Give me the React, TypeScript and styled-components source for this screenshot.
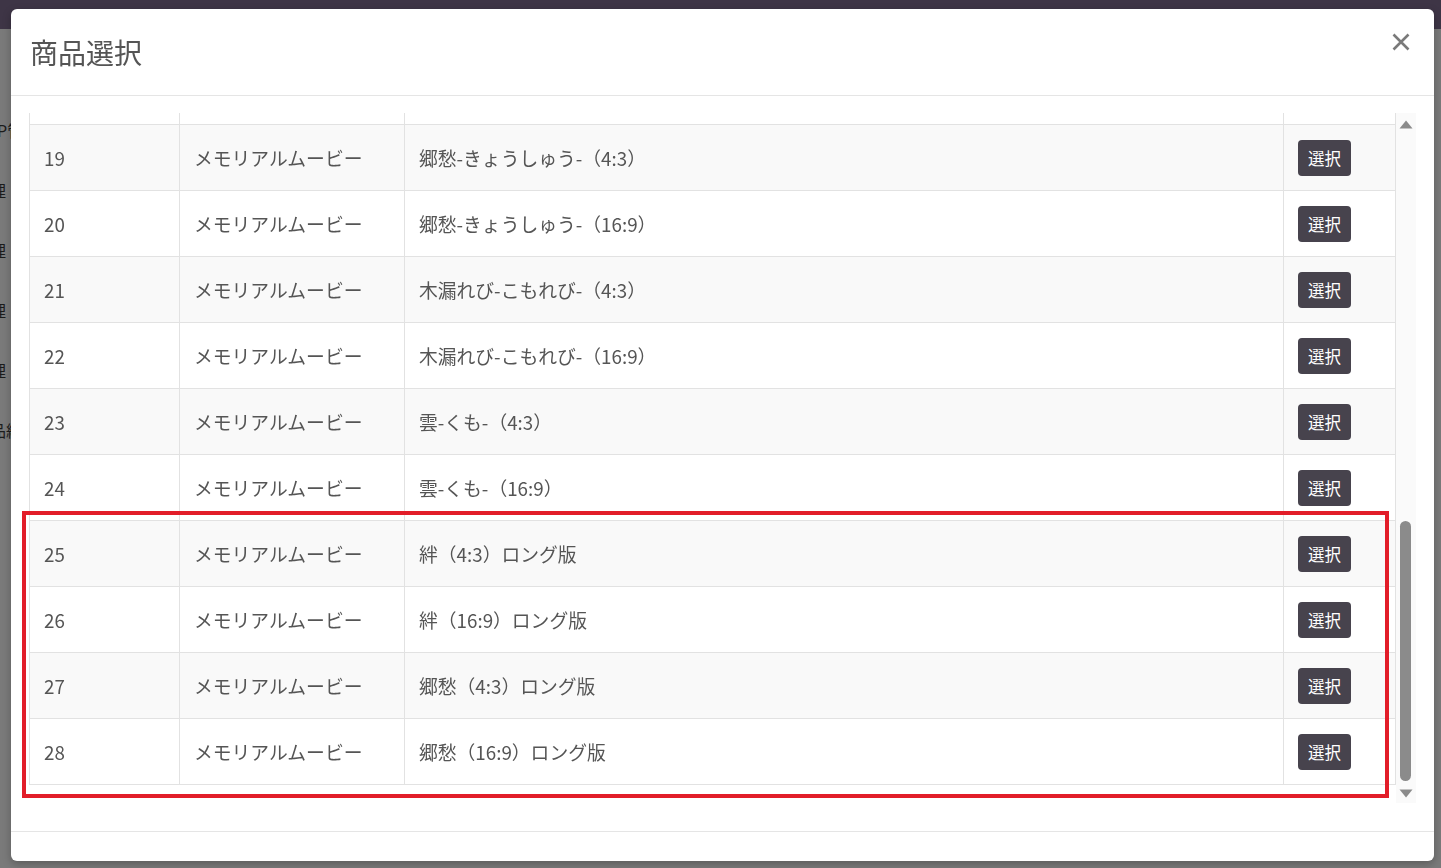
import React, { useLayoutEffect, useRef } from "react";
import styled, { createGlobalStyle } from "styled-components";

const GlobalStyle = createGlobalStyle`
  html, body { margin: 0; padding: 0; height: 100%; overflow: hidden; }
  body {
    font-family: "Noto Sans CJK JP", "Noto Sans", sans-serif;
    background: #7a7a7a;
  }
  #root { height: 100%; }
`;

const Page = styled.div`
  height: 100vh;
  display: flex;
  flex-direction: column;
  background: #7a7a7a;
  overflow: hidden;
`;

const NavBar = styled.header`
  height: 29px;
  flex: none;
  background: #3e3546;
`;

const PageBody = styled.div`
  flex: 1;
  display: flex;
`;

const SideMenu = styled.nav`
  width: 160px;
  flex: none;
  padding-top: 71px;
  display: flex;
  flex-direction: column;
`;

const MenuItem = styled.div<{ $indent: number }>`
  height: 60px;
  display: flex;
  align-items: center;
  white-space: nowrap;
  font-size: 16px;
  color: #1c1c1c;
  text-indent: ${(p) => p.$indent}px;
`;

const Modal = styled.div`
  position: fixed;
  top: 9px;
  left: 11px;
  width: 1423px;
  height: 852px;
  background: #fff;
  border-radius: 6px;
  display: flex;
  flex-direction: column;
  box-shadow: 0 3px 9px rgba(0, 0, 0, 0.25);
`;

const ModalHeader = styled.div`
  box-sizing: border-box;
  height: 87px;
  flex: none;
  display: flex;
  align-items: center;
  justify-content: space-between;
  padding: 0 24px 0 19px;
  border-bottom: 1px solid #e5e5e5;
`;

const Title = styled.h4`
  margin: 0;
  font-size: 28px;
  font-weight: 400;
  color: #555;
  letter-spacing: 0;
`;

const CloseButton = styled.button`
  border: 0;
  background: transparent;
  padding: 0;
  margin-top: -20px;
  width: 18px;
  height: 18px;
  display: flex;
  cursor: pointer;
`;

const ModalBody = styled.div`
  flex: 1;
  min-height: 0;
  position: relative;
  display: flex;
  padding: 17px 18px 28px 18px;
`;

const TableScroll = styled.div`
  flex: 1;
  min-width: 0;
  overflow: hidden;
`;

const Table = styled.table`
  width: 100%;
  border-collapse: collapse;
  table-layout: fixed;
  margin-bottom: 20px;
  color: #555;
  font-size: 18.8px;
`;

const Row = styled.tr<{ $striped: boolean }>`
  background: ${(p) => (p.$striped ? "#f9f9f9" : "#fff")};
`;

const Cell = styled.td`
  border: 1px solid #e2e2e2;
  height: 65px;
  padding: 0 14px;
  vertical-align: middle;
  white-space: nowrap;
  overflow: hidden;
`;

const SelectButton = styled.button`
  display: inline-flex;
  align-items: center;
  height: 36px;
  padding: 0 10px;
  border: 0;
  border-radius: 4px;
  background: #47434d;
  color: #fff;
  font-family: inherit;
  font-size: 16.5px;
  cursor: pointer;
`;

const ScrollBar = styled.div`
  width: 20px;
  flex: none;
  display: flex;
  flex-direction: column;
  background: #fafafa;
`;

const ScrollArrow = styled.div<{ $h: number }>`
  height: ${(p) => p.$h}px;
  flex: none;
  display: flex;
  align-items: center;
  justify-content: center;
`;

const Track = styled.div`
  flex: 1;
  display: flex;
  flex-direction: column;
  justify-content: flex-end;
  padding-bottom: 3px;
`;

const Thumb = styled.div`
  width: 11px;
  height: 260px;
  margin-left: 4px;
  border-radius: 6px;
  background: #8b8b8b;
`;

const Highlight = styled.div`
  position: absolute;
  left: 11px;
  top: 415px;
  width: 1367px;
  height: 287px;
  box-sizing: border-box;
  border: 4px solid #e21d29;
  pointer-events: none;
`;

const ModalFooter = styled.div`
  height: 29px;
  flex: none;
  border-top: 1px solid #e5e5e5;
`;

const products = [
  { id: 18, category: "メモリアルムービー", name: "絆-きずな-（16:9）" },
  { id: 19, category: "メモリアルムービー", name: "郷愁-きょうしゅう-（4:3）" },
  { id: 20, category: "メモリアルムービー", name: "郷愁-きょうしゅう-（16:9）" },
  { id: 21, category: "メモリアルムービー", name: "木漏れび-こもれび-（4:3）" },
  { id: 22, category: "メモリアルムービー", name: "木漏れび-こもれび-（16:9）" },
  { id: 23, category: "メモリアルムービー", name: "雲-くも-（4:3）" },
  { id: 24, category: "メモリアルムービー", name: "雲-くも-（16:9）" },
  { id: 25, category: "メモリアルムービー", name: "絆（4:3）ロング版" },
  { id: 26, category: "メモリアルムービー", name: "絆（16:9）ロング版" },
  { id: 27, category: "メモリアルムービー", name: "郷愁（4:3）ロング版" },
  { id: 28, category: "メモリアルムービー", name: "郷愁（16:9）ロング版" },
];

const menu = [
  { label: "SHOP管理", indent: -36 },
  { label: "会員管理", indent: -58 },
  { label: "受注管理", indent: -58 },
  { label: "商品管理", indent: -58 },
  { label: "売上管理", indent: -58 },
  { label: "商品編集", indent: -26 },
];

export default function App() {
  const scrollRef = useRef<HTMLDivElement>(null);

  useLayoutEffect(() => {
    if (scrollRef.current) scrollRef.current.scrollTop = 55;
  }, []);

  return (
    <>
      <GlobalStyle />
      <Page>
        <NavBar />
        <PageBody>
          <SideMenu>
            {menu.map((m) => (
              <MenuItem key={m.label} $indent={m.indent}>
                {m.label}
              </MenuItem>
            ))}
          </SideMenu>
        </PageBody>
      </Page>

      <Modal role="dialog">
        <ModalHeader>
          <Title>商品選択</Title>
          <CloseButton aria-label="閉じる">
            <svg width="18" height="18" viewBox="0 0 18 18">
              <path
                d="M1.5 1.5 L16.5 16.5 M16.5 1.5 L1.5 16.5"
                stroke="#7a7a7a"
                strokeWidth="2.6"
                strokeLinecap="butt"
              />
            </svg>
          </CloseButton>
        </ModalHeader>

        <ModalBody>
          <TableScroll ref={scrollRef}>
            <Table>
              <colgroup>
                <col style={{ width: 150 }} />
                <col style={{ width: 225 }} />
                <col style={{ width: 879 }} />
                <col />
              </colgroup>
              <tbody>
                {products.map((p) => (
                  <Row key={p.id} $striped={p.id % 2 === 1}>
                    <Cell>{p.id}</Cell>
                    <Cell>{p.category}</Cell>
                    <Cell>{p.name}</Cell>
                    <Cell>
                      <SelectButton>選択</SelectButton>
                    </Cell>
                  </Row>
                ))}
              </tbody>
            </Table>
          </TableScroll>
          <ScrollBar>
            <ScrollArrow $h={23}>
              <svg width="14" height="9" viewBox="0 0 14 9">
                <path d="M7 0.5 L13.5 8.5 L0.5 8.5 Z" fill="#8b8b8b" />
              </svg>
            </ScrollArrow>
            <Track>
              <Thumb />
            </Track>
            <ScrollArrow $h={19}>
              <svg width="14" height="9" viewBox="0 0 14 9">
                <path d="M0.5 0.5 L13.5 0.5 L7 8.5 Z" fill="#8b8b8b" />
              </svg>
            </ScrollArrow>
          </ScrollBar>
          <Highlight />
        </ModalBody>

        <ModalFooter />
      </Modal>
    </>
  );
}
